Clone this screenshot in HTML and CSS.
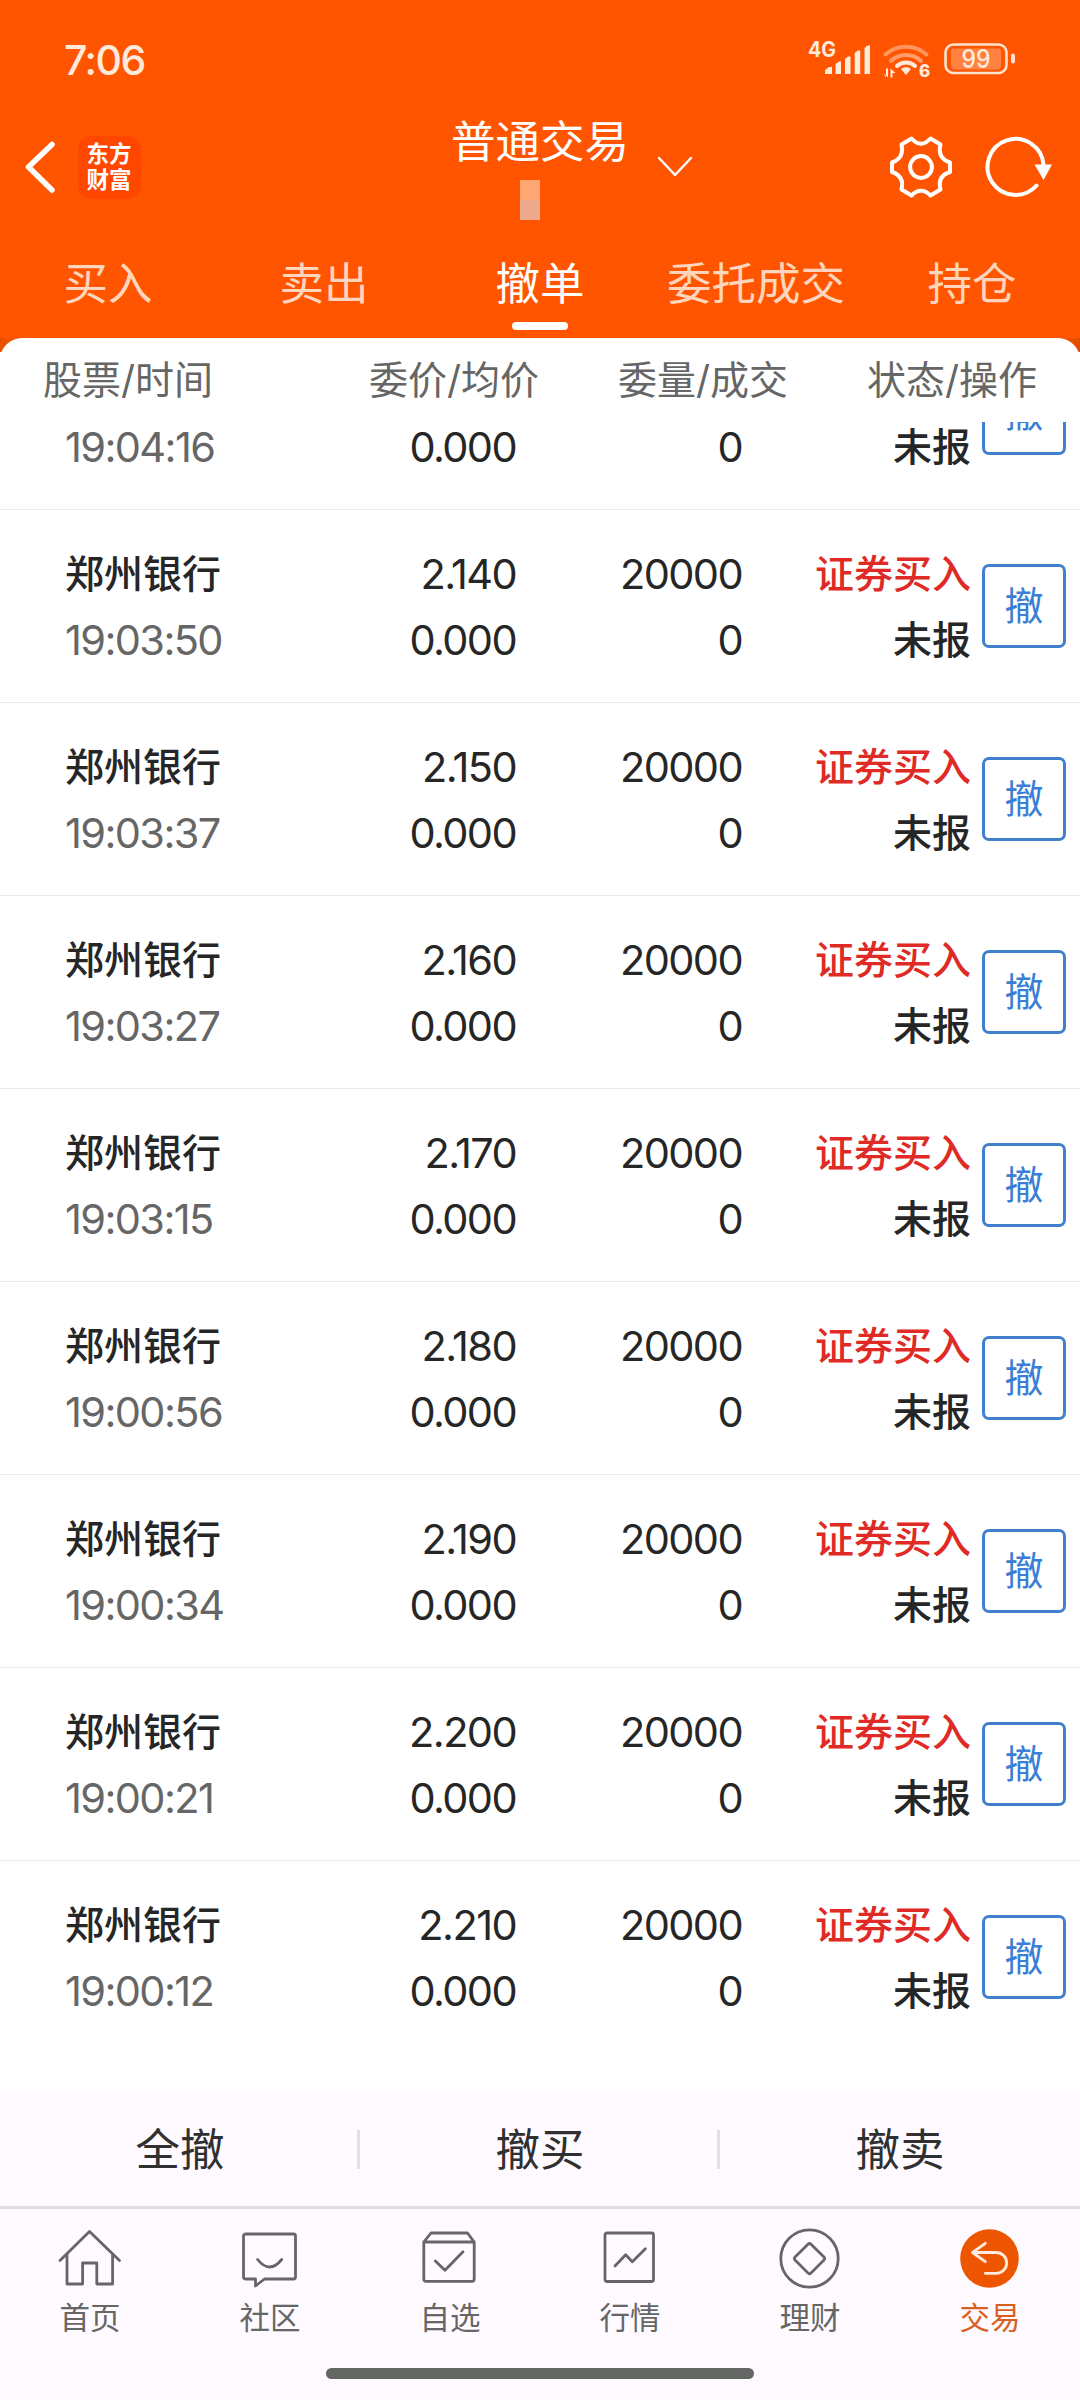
FILE: index.html
```html
<!DOCTYPE html>
<html lang="zh-CN">
<head>
<meta charset="utf-8">
<title>普通交易</title>
<link rel="stylesheet" href="styles.css">
</head>
<body>
<div class="app">
  <header class="header">
    <div class="status">
      <span class="clock">7:06</span>
      <svg class="status-icons" width="216" height="50" viewBox="0 0 216 50">
        <text class="net" x="1" y="18" textLength="28" lengthAdjust="spacingAndGlyphs">4G</text>
        <g fill="#ffeadc">
          <path d="M18 35v-4l4-3h3v7zM28.500 35v-10l3.500-2.500h2v12.500zM38 35v-15l3-2.500h2.500v17.500zM47.700 35v-21l3-2.500h2.500v23.500zM57.500 35v-26l3-2.500h2.500v28.500z"/>
          <path d="M94 30a8 8 0 0 1 10 0l-5 6z"/>
          <path d="M79 38.500v-9h2v9l-5-4.500zM83.500 38.500v-9l5 4.500h-3v4.500z"/>
        </g>
        <g fill="none" stroke-linecap="round" stroke-width="4">
          <path d="M78.500 15.500a31 31 0 0 1 41 0" stroke="#ff965f"/>
          <path d="M84 22a22 22 0 0 1 30 0" stroke="#ff9c68"/>
          <path d="M90 27a13 13 0 0 1 18 0" stroke="#ffeadc"/>
        </g>
        <text class="wifi-gen" x="112" y="38">6</text>
        <rect x="138.500" y="5.500" width="61" height="28.500" rx="8" fill="none" stroke="#ffe3d0" stroke-width="2.600"/>
        <rect x="144" y="9.500" width="50" height="21" rx="3" fill="#ff8240"/>
        <rect x="204" y="14.500" width="4" height="10" rx="2" fill="#ffe3d0"/>
        <text class="battery" x="154.500" y="29" textLength="29" lengthAdjust="spacingAndGlyphs">99</text>
      </svg>
    </div>
    <div class="titlebar">
      <div class="brand">
        <svg width="36" height="60" viewBox="0 0 36 60"><path d="M32 7.500 8.500 30 32 53" fill="none" stroke="#fff" stroke-width="5.500" stroke-linecap="round" stroke-linejoin="round"/></svg>
        <div class="logo"><span>东方</span><span>财富</span></div>
      </div>
      <div class="title">
        <h1>普通交易</h1>
        <div class="account"></div>
        <svg class="caret" width="38" height="22" viewBox="0 0 38 22"><path d="m3 2 16 17L35 2" fill="none" stroke="#fff" stroke-width="2.500" stroke-linecap="round" stroke-linejoin="round"/></svg>
      </div>
      <div class="tools">
        <svg width="66" height="66" viewBox="0 0 66 66" fill="none" stroke="#fff" stroke-width="4" stroke-linejoin="round">
          <path d="M23.500 4.500Q33 15 42.500 4.500L52.500 10.500Q49 24 62 28.500V38Q49 42 52.500 55.500L42.500 61.500Q33 52 23.500 61.500L13.500 55.500Q16.500 42 4 38V28.500Q16.500 24 13.500 10.500Z"/>
          <circle cx="33" cy="33" r="10.900"/>
        </svg>
        <svg width="70" height="66" viewBox="0 0 70 66">
          <path d="M59.500 31A28 28 0 1 0 52.500 51.500" fill="none" stroke="#fff" stroke-width="4" stroke-linecap="round"/>
          <path d="M50.500 30.500H68L59.500 46z" fill="#fff"/>
        </svg>
      </div>
    </div>
    <nav class="tabs">
      <span>买入</span>
      <span>卖出</span>
      <span class="active">撤单</span>
      <span>委托成交</span>
      <span>持仓</span>
    </nav>
  </header>

  <main class="panel">
    <div class="thead">
      <span>股票/时间</span>
      <span>委价/均价</span>
      <span>委量/成交</span>
      <span>状态/操作</span>
    </div>
    <div class="list">
      <div class="row scrolled"><div class="name"><i>19:04:16</i></div><div class="num"><b>0.000</b></div><div class="num"><b>0</b></div><div class="state"><b>未报</b></div><div class="cancel">撤</div></div>
      <div class="row"><div class="name"><b>郑州银行</b><i>19:03:50</i></div><div class="num"><b>2.140</b><b>0.000</b></div><div class="num"><b>20000</b><b>0</b></div><div class="state"><em>证券买入</em><b>未报</b></div><div class="cancel">撤</div></div>
      <div class="row"><div class="name"><b>郑州银行</b><i>19:03:37</i></div><div class="num"><b>2.150</b><b>0.000</b></div><div class="num"><b>20000</b><b>0</b></div><div class="state"><em>证券买入</em><b>未报</b></div><div class="cancel">撤</div></div>
      <div class="row"><div class="name"><b>郑州银行</b><i>19:03:27</i></div><div class="num"><b>2.160</b><b>0.000</b></div><div class="num"><b>20000</b><b>0</b></div><div class="state"><em>证券买入</em><b>未报</b></div><div class="cancel">撤</div></div>
      <div class="row"><div class="name"><b>郑州银行</b><i>19:03:15</i></div><div class="num"><b>2.170</b><b>0.000</b></div><div class="num"><b>20000</b><b>0</b></div><div class="state"><em>证券买入</em><b>未报</b></div><div class="cancel">撤</div></div>
      <div class="row"><div class="name"><b>郑州银行</b><i>19:00:56</i></div><div class="num"><b>2.180</b><b>0.000</b></div><div class="num"><b>20000</b><b>0</b></div><div class="state"><em>证券买入</em><b>未报</b></div><div class="cancel">撤</div></div>
      <div class="row"><div class="name"><b>郑州银行</b><i>19:00:34</i></div><div class="num"><b>2.190</b><b>0.000</b></div><div class="num"><b>20000</b><b>0</b></div><div class="state"><em>证券买入</em><b>未报</b></div><div class="cancel">撤</div></div>
      <div class="row"><div class="name"><b>郑州银行</b><i>19:00:21</i></div><div class="num"><b>2.200</b><b>0.000</b></div><div class="num"><b>20000</b><b>0</b></div><div class="state"><em>证券买入</em><b>未报</b></div><div class="cancel">撤</div></div>
      <div class="row"><div class="name"><b>郑州银行</b><i>19:00:12</i></div><div class="num"><b>2.210</b><b>0.000</b></div><div class="num"><b>20000</b><b>0</b></div><div class="state"><em>证券买入</em><b>未报</b></div><div class="cancel">撤</div></div>
    </div>
  </main>

  <div class="actions">
    <span>全撤</span>
    <span>撤买</span>
    <span>撤卖</span>
  </div>

  <footer class="bottom">
    <nav class="nav">
      <div class="item">
        <svg class="ico" viewBox="0 0 66 66"><path d="M3 35.500 32.500 6.500 62.500 35.500M10 29.500V59H25.600V38H39.800V59H55.600V29.500"/></svg>
        <span>首页</span>
      </div>
      <div class="item">
        <svg class="ico" viewBox="0 0 66 66"><path d="M9 9H56.500Q58.500 9 58.500 11V52Q58.500 54 56.500 54H27.500L18.500 61V54H9Q6.500 54 6.500 52V11Q6.500 9 9 9ZM20.600 34.500Q32.500 49.500 44.700 34.500"/></svg>
        <span>社区</span>
      </div>
      <div class="item">
        <svg class="ico" viewBox="0 0 66 66"><path d="M6.800 17 14 8H50.500L57.200 17V54Q57.200 56.300 55 56.300H9Q6.800 56.300 6.800 54ZM6.800 17H57.200M18.300 36 28 45.300 46 26.700"/></svg>
        <span>自选</span>
      </div>
      <div class="item">
        <svg class="ico" viewBox="0 0 66 66"><rect x="8" y="8" width="48.500" height="48.500" rx="2"/><path d="M18 41 28.700 29.700 35.300 36.700 48.400 23.700"/></svg>
        <span>行情</span>
      </div>
      <div class="item">
        <svg class="ico" viewBox="0 0 66 66"><circle cx="32.500" cy="33.500" r="28.700"/><path d="M31 19.200Q32.500 17.600 34 19.200L47 32Q48.300 33.500 47 35L34 48Q32.500 49.500 31 48L18 35Q16.700 33.500 18 32Z"/></svg>
        <span>理财</span>
      </div>
      <div class="item current">
        <svg class="ico" viewBox="0 0 66 66"><circle cx="32.500" cy="33.500" r="29.300" fill="#ee5500" stroke="none"/><path d="M28.300 18.300 15.500 27.500 28.300 36.700M15.500 27.500H39.300A10.400 10.400 0 0 1 39.300 48.300H28.300" stroke="#ffeadc"/></svg>
        <span>交易</span>
      </div>
    </nav>
    <div class="home-bar"></div>
  </footer>
</div>
</body>
</html>
```
FILE: styles.css
```css
* { box-sizing: border-box; }

body {
  margin: 0;
  background: #fff;
  font-family: Inter, "Noto Sans CJK SC", sans-serif;
  color: #262626;
}

b, i, em, h1 { font-weight: 400; font-style: normal; margin: 0; }
svg { display: block; }

.app {
  width: 1080px;
  height: 2400px;
  display: flex;
  flex-direction: column;
  overflow: hidden;
}

.header {
  flex: none;
  height: 352px;
  background:
    linear-gradient(90deg, #e65100, #ff5500 24px, #ff5500 1056px, #dc4e00) 0 338px / 100% 14px no-repeat,
    #ff5500;
  color: #fff;
}

.status {
  height: 107px;
  padding: 30px 57px 0 64px;
  display: flex;
  justify-content: space-between;
}
.clock { font-size: 41px; line-height: 60px; font-weight: 500; letter-spacing: -1.500px; color: #ffeadc; }
.status-icons { margin-top: 9px; overflow: visible; }
.status-icons text { font-family: Inter, sans-serif; fill: #ffeadc; }
.net { font-size: 21px; font-weight: 700; }
.wifi-gen { font-size: 17px; font-weight: 800; }
.battery { font-size: 25px; font-weight: 500; }

.titlebar {
  height: 120px;
  display: grid;
  grid-template-columns: 1fr 200px 1fr;
}
.brand { display: flex; align-items: center; padding-left: 20px; gap: 21.500px; }
.logo {
  width: 63px;
  height: 63px;
  border-radius: 13px;
  background: #ff4700;
  display: flex;
  flex-direction: column;
  align-items: center;
  justify-content: center;
  font-size: 22.500px;
  font-weight: 700;
  line-height: 26.500px;
}
.title { position: relative; padding-top: 2px; text-align: center; }
.title h1 { font-size: 44.500px; line-height: 66px; white-space: nowrap; }
.account {
  width: 20px;
  height: 40px;
  margin: 5px 0 0 80px;
  background: linear-gradient(#ffa873 50%, #eeaa8d 50%);
}
.caret { position: absolute; left: 216px; top: 48.500px; }
.tools { display: flex; align-items: center; justify-content: flex-end; gap: 30px; padding-right: 26px; }

.tabs {
  height: 125px;
  display: grid;
  grid-template-columns: repeat(5, 1fr);
  padding-top: 24px;
  font-size: 44.500px;
  line-height: 66px;
  text-align: center;
  color: #ffd5bd;
}
.tabs .active { color: #fff; }
.tabs .active::after {
  content: "";
  display: block;
  width: 56px;
  height: 8px;
  margin: 5px auto 0;
  border-radius: 4px;
  background: #fff;
}

.panel {
  flex: none;
  height: 1754px;
  margin-top: -14px;
  border-radius: 22px 22px 0 0;
  background: #fff;
}
.thead {
  height: 84px;
  padding: 12px 43px 0;
  display: flex;
  font-size: 39px;
  line-height: 60px;
  color: #666;
  white-space: nowrap;
}
.thead span { width: 249px; }
.thead span:first-child { width: 326px; }
.thead span:last-child { width: auto; }

.list {
  height: 1656px;
  overflow: hidden;
  display: flex;
  flex-direction: column;
  justify-content: flex-end;
  padding-bottom: 24px;
}
.row {
  flex: none;
  height: 193px;
  border-bottom: 1px solid #ebebeb;
  display: grid;
  grid-template-columns: 235px 216px 226px 229px 82px;
  padding: 31px 0 0 65px;
  font-size: 39px;
  line-height: 66px;
}
.row:last-child { border-bottom-color: transparent; }
.row > div { display: flex; flex-direction: column; }
.row .num, .row .state { align-items: flex-end; }
.row .num, .row i { font-size: 41.500px; letter-spacing: -1.600px; }
.row i { color: #666; }
.row .name b, .row .state b, .row em { font-weight: 450; }
.row em { color: #e02a26; }
.row .cancel {
  width: 84px;
  height: 84px;
  margin: 23px 0 0 11px;
  border: 3px solid #4080cc;
  border-radius: 7px;
  color: #3a7fd5;
  align-items: center;
  justify-content: center;
}
/* Row partly scrolled under the table head: only its second line is visible */
.row.scrolled > div:not(.cancel) { padding-top: 66px; }

.actions {
  flex: none;
  height: 114px;
  background: #fefaff;
  display: grid;
  grid-template-columns: repeat(3, 1fr);
  align-items: center;
  text-align: center;
  font-size: 44.500px;
  line-height: 66px;
  color: #303030;
}
.actions span { padding-top: 1px; }
.actions span:not(:last-child) {
  background: linear-gradient(#dfe0e6, #dfe0e6) 100% 50% / 3px 39px no-repeat;
}

.bottom {
  flex: none;
  height: 194px;
  border-top: 3px solid #dfe0e6;
  background: #fefaff;
}
.nav {
  height: 159px;
  padding-top: 16px;
  display: grid;
  grid-template-columns: repeat(6, 1fr);
}
.item {
  display: flex;
  flex-direction: column;
  align-items: center;
  gap: 5px;
  font-size: 30.500px;
  line-height: 44px;
  color: #666;
}
.item.current { color: #d95f1e; }
.ico {
  width: 66px;
  height: 66px;
  fill: none;
  stroke: #666;
  stroke-width: 2.800;
  stroke-linecap: round;
  stroke-linejoin: round;
}
.home-bar {
  width: 428px;
  height: 11px;
  margin: 0 auto;
  border-radius: 6px;
  background: #646664;
}
```
